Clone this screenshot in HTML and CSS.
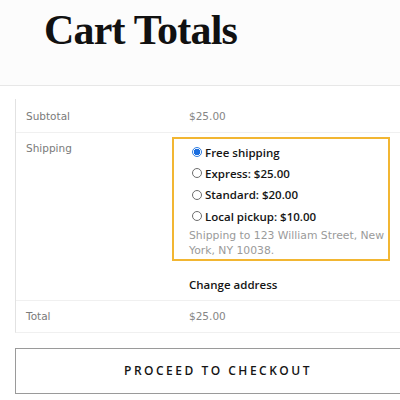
FILE: index.html
```html
<!DOCTYPE html>
<html>
<head>
<meta charset="utf-8">
<link rel="stylesheet" href="styles.css">
</head>
<body>
<div class="page">
  <header class="title-bar">
    <h1 class="title">Cart Totals</h1>
  </header>
  <main class="content">
    <div class="totals">
      <div class="row row-subtotal">
        <div class="label">Subtotal</div>
        <div class="value">$25.00</div>
      </div>
      <div class="row row-shipping">
        <div class="label label-top">Shipping</div>
        <div class="value-wide">
          <div class="ship-box">
            <div class="option"><span class="radio checked"></span>Free shipping</div>
            <div class="option"><span class="radio"></span>Express: $25.00</div>
            <div class="option"><span class="radio"></span>Standard: $20.00</div>
            <div class="option"><span class="radio"></span>Local pickup: $10.00</div>
            <p class="ship-to">Shipping to 123 William Street, New York, NY 10038.</p>
          </div>
          <div class="change">Change address</div>
        </div>
      </div>
      <div class="row row-total">
        <div class="label">Total</div>
        <div class="value">$25.00</div>
      </div>
    </div>
    <button class="checkout">PROCEED TO CHECKOUT</button>
  </main>
</div>
</body>
</html>
```
FILE: styles.css
```css
html, body {
  margin: 0;
  padding: 0;
  background: #ffffff;
  overflow: hidden;
}
.page {
  width: 400px;
  height: 400px;
  overflow: hidden;
  font-family: "DejaVu Sans", sans-serif;
}
.title-bar {
  height: 86px;
  background: #fcfcfc;
  border-bottom: 1px solid #e7e7e7;
  padding-left: 44px;
  box-sizing: border-box;
}
.title {
  margin: 0;
  padding-top: 6px;
  font-family: "Liberation Serif", serif;
  font-weight: 700;
  font-size: 42px;
  letter-spacing: -0.8px;
  line-height: 48px;
  color: #111;
}
.content {
  padding: 13px 0 0 15px;
  width: 406px;
}
.totals {
  border-left: 1px solid #e2e2e2;
  border-bottom: 1px solid #f0f0f0;
}
.row {
  display: grid;
  grid-template-columns: 156px 1fr;
  border-bottom: 1px solid #f0f0f0;
}
.row:last-child { border-bottom: none; }
.label {
  padding-left: 10px;
  font-size: 10.5px;
  color: #7a7a7a;
  display: flex;
  align-items: center;
}
.label-top {
  align-items: flex-start;
  padding-top: 9px;
}
.value {
  padding-left: 17px;
  font-size: 10.5px;
  color: #858585;
  display: flex;
  align-items: center;
}
.row-subtotal { height: 33px; }
.row-total { height: 31px; }
.value-wide {
  padding-top: 4px;
}
.ship-box {
  width: 218px;
  box-sizing: border-box;
  border: 2px solid #f2b632;
  padding: 2.5px 0 0 18px;
}
.option {
  display: flex;
  align-items: center;
  height: 21.3px;
  font-family: "Open Sans", sans-serif;
  font-size: 11.5px;
  font-weight: 600;
  color: #151515;
}
.radio {
  width: 8px;
  height: 8px;
  border: 1px solid #6d6d6d;
  border-radius: 50%;
  margin: 0 3px 0 0;
  box-sizing: content-box;
  background: #fff;
  flex: none;
}
.radio.checked {
  border-color: #2f7de1;
  background: radial-gradient(circle, #1a6ee0 0 3px, #ffffff 3.5px 100%);
}
.ship-to {
  margin: 1px 0 0 -3px;
  font-size: 10.8px;
  line-height: 15.5px;
  color: #9a9a9a;
}
.change {
  padding: 18px 0 9px 17px;
  line-height: 12px;
  font-family: "Open Sans", sans-serif;
  font-size: 11.5px;
  font-weight: 600;
  color: #151515;
}
.checkout {
  display: block;
  margin-top: 15px;
  width: 406px;
  height: 46px;
  background: #fff;
  border: 1.5px solid #9a9a9a;
  font-family: "Open Sans", sans-serif;
  font-size: 12px;
  font-weight: 600;
  letter-spacing: 2.5px;
  color: #151515;
  text-align: center;
  padding: 0;
}
```
